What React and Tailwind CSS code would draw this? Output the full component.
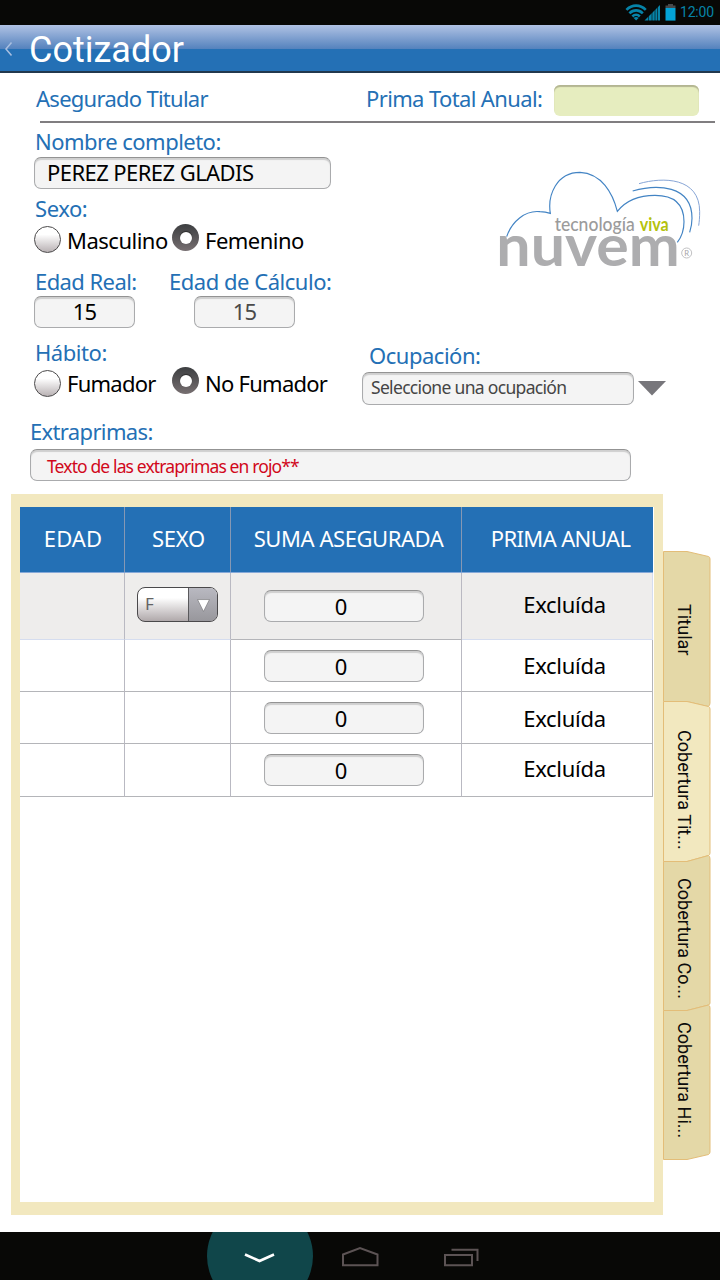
function Label({ children, className = "" }) {
  return (
    <div className={`whitespace-nowrap text-[22px] leading-[24px] text-[#2470b5] ${className}`}>
      {children}
    </div>
  );
}

function Field({ children, className = "" }) {
  return (
    <div
      className={`flex items-center whitespace-nowrap rounded-[7px] border border-[#aaabad] border-t-[#939393] bg-[#f4f4f4] shadow-[inset_0_2px_1px_#cfcfcf] ${className}`}
    >
      {children}
    </div>
  );
}

function Radio({ checked, className = "" }) {
  return checked ? (
    <div
      className={`flex size-[27px] shrink-0 items-center justify-center rounded-full bg-linear-to-b from-[#3d3f41] to-[#776f71] ${className}`}
    >
      <div className="size-[12px] rounded-full bg-white shadow-[0_-1px_1px_#2a2a2a]" />
    </div>
  ) : (
    <div
      className={`size-[27px] shrink-0 rounded-full border-[1.5px] border-[#4b4a4b] bg-linear-to-b from-[#ffffff] from-30% to-[#b9b2b4] ${className}`}
    />
  );
}

function StatusBar() {
  return (
    <div className="flex h-[25px] shrink-0 items-start justify-end bg-[#080806] pr-[4px]">
      <svg className="mt-[4px] h-[17px] w-[55px]" viewBox="0 0 55 17">
        <g fill="none" stroke="#0683a8" strokeWidth="2.6">
          <path d="M1.400 5.800 C7 0.200 15.200 0.200 20.800 5.800" />
          <path d="M4.400 9.300 C8.300 5.400 13.900 5.400 17.800 9.300" />
          <path d="M7.400 12.500 C9.600 10.200 12.600 10.200 14.800 12.500" />
        </g>
        <path d="M8.600 13.900 Q11.100 12 13.600 13.900 L11.100 16.500 Z" fill="#0683a8" />
        <path d="M19.500 16.500 L35 1 V16.500 Z" fill="#0683a8" />
        <path d="M23.500 11V17M27 8V17M30 5V17M32.500 2V17" stroke="#080806" strokeWidth="0.600" />
        <path d="M40.500 1.500h2.500V0h5v1.500h2.500v2.500h-10z" fill="#47484a" />
        <path d="M40.500 4h10v12.600h-10z" fill="#04a3d6" />
      </svg>
      <div className="ml-[0px] mt-[2px] w-[36px] whitespace-nowrap font-['Roboto',sans-serif] text-[14px] leading-[20px] tracking-[-0.2px] text-[#0683a8]">
        12:00
      </div>
    </div>
  );
}

function TitleBar() {
  return (
    <div className="flex h-[48px] shrink-0 items-start border-b-2 border-[#22384d] bg-[linear-gradient(to_bottom,#b0c2e4_0px,#5482bd_24px,#2470b5_24px)]">
      <svg className="ml-[4px] mt-[17px] h-[14px] w-[9px]" viewBox="0 0 9 14">
        <path d="M7.500 0.500 L2 7 L7.500 13.500" fill="none" stroke="#a9bfe0" strokeWidth="1.500" />
      </svg>
      <h1 className="ml-[16px] mt-[5px] whitespace-nowrap font-['Roboto',sans-serif] text-[36px] leading-[41px] text-white">
        Cotizador
      </h1>
    </div>
  );
}

function Logo() {
  return (
    <svg className="h-[120px] w-[230px]" viewBox="0 0 690 360">
      <g fill="none" stroke="#4384c4" strokeWidth="3.500">
        <path d="M50 230 C65 185 105 150 150 155 C163 155 172 157 181 160 C172 105 200 37 270 37 C335 40 368 100 382 154 C405 125 440 106 495 106 C560 106 582 140 582 185 C582 210 575 230 562 247" />
        <path d="M428 93 C500 72 606 74 606 175 C606 190 603 205 599 217" />
        <path d="M447 71 C520 50 629 52 629 155 C629 172 628 185 626 197" stroke="#87a5d6" strokeWidth="3" />
      </g>
      <text x="194" y="213" textLength="240" lengthAdjust="spacingAndGlyphs" fill="#9b9b9b" className="font-['Lato',sans-serif] text-[58px] font-medium">
        tecnología
      </text>
      <text x="449" y="213" textLength="87" lengthAdjust="spacingAndGlyphs" fill="#b4c20c" className="font-['Lato',sans-serif] text-[58px] font-bold">
        viva
      </text>
      <text x="19" y="318" textLength="550" lengthAdjust="spacingAndGlyphs" fill="#adadaf" className="font-['Lato',sans-serif] text-[174px] font-bold">
        nuvem
      </text>
      <circle cx="590" cy="279" r="15" fill="none" stroke="#b5b5b7" strokeWidth="2.500" />
      <text x="590" y="287" textAnchor="middle" fill="#a5a5a7" className="font-['Lato',sans-serif] text-[23px]">
        R
      </text>
    </svg>
  );
}

function Insured() {
  return (
    <div className="flex h-[421px] shrink-0 flex-col">
      <div className="mr-[5px] ml-[40px] flex h-[50px] shrink-0 items-start border-b-2 border-[#807e80]">
        <Label className="-ml-[4px] mt-[13px] w-[331px] tracking-[-0.73px]">Asegurado Titular</Label>
        <Label className="-ml-[1px] mt-[13px] w-[188px] tracking-[-0.63px]">Prima Total Anual:</Label>
        <div className="mt-[12px] h-[31px] w-[145px] rounded-[6px] bg-[#e6edbf] shadow-[inset_0_2px_1px_#b3b592]" />
      </div>

      <div className="flex h-[296px] shrink-0">
        <div className="flex w-[360px] shrink-0 flex-col pl-[34px]">
          <Label className="mt-[6px] pl-[1px] tracking-[-0.52px]">Nombre completo:</Label>
          <Field className="mt-[4px] h-[32px] w-[297px] pb-[2px] pl-[12px] text-[22px] tracking-[-0.57px] text-black">PEREZ PEREZ GLADIS</Field>
          <Label className="mt-[7px] pl-[1px] tracking-[-0.45px]">Sexo:</Label>
          <div className="mt-[3px] flex h-[31px] whitespace-nowrap text-[22px] leading-[24px] text-black">
            <Radio className="mt-[3px]" />
            <span className="mt-[5px] ml-[6px] w-[105px] tracking-[-0.5px]">Masculino</span>
            <Radio checked className="mt-px" />
            <span className="mt-[5px] ml-[6px] tracking-[-0.52px]">Femenino</span>
          </div>
          <div className="mt-[15px] flex">
            <Label className="w-[134px] pl-[1px] tracking-[-0.58px]">Edad Real:</Label>
            <Label className="pl-[1px] tracking-[-0.47px]">Edad de Cálculo:</Label>
          </div>
          <div className="mt-[3px] flex gap-[59px] text-[22px] tracking-[-0.8px]">
            <Field className="h-[32px] w-[101px] justify-center pb-[2px] text-black">15</Field>
            <Field className="h-[32px] w-[101px] justify-center pb-[2px] text-[#4a4a4a]">15</Field>
          </div>
          <Label className="mt-[12px] pl-[1px] tracking-[-0.45px]">Hábito:</Label>
          <div className="mt-[3px] flex h-[31px] whitespace-nowrap text-[22px] leading-[24px] text-black">
            <Radio className="mt-[3px]" />
            <span className="mt-[4px] ml-[6px] w-[105px] tracking-[-0.76px]">Fumador</span>
            <Radio checked />
            <span className="mt-[4px] ml-[6px] tracking-[-0.74px]">No Fumador</span>
          </div>
        </div>

        <div className="flex w-[360px] flex-col">
          <div className="mt-[37px] pl-[130px]">
            <Logo />
          </div>
          <Label className="mt-[63px] pl-[9px] tracking-[-0.48px]">Ocupación:</Label>
          <div className="mt-[5px] flex pl-[2px]">
            <Field className="h-[33px] w-[272px] pb-[2px] pl-[8px] text-[17.5px] tracking-[-0.68px] text-[#454545]">Seleccione una ocupación</Field>
            <svg className="mt-[9px] ml-[4px] h-[15px] w-[28px]" viewBox="0 0 28 15">
              <path d="M0 0H28L14 14.500Z" fill="#77767b" />
            </svg>
          </div>
        </div>
      </div>

      <Label className="pl-[30px] tracking-[-0.65px]">Extraprimas:</Label>
      <Field className="mt-[6px] ml-[30px] h-[32px] w-[601px] pt-[3px] pl-[16px] text-[17.5px] tracking-[-0.88px] text-[#d1081b]">Texto de las extraprimas en rojo**</Field>
    </div>
  );
}

const columns = [
  { title: "EDAD", style: "pl-[2px] tracking-[0.1px]" },
  { title: "SEXO", style: "pl-[2px] tracking-[-0.2px]" },
  { title: "SUMA ASEGURADA", style: "pl-[5px] tracking-[-0.44px]" },
  { title: "PRIMA ANUAL", style: "pl-[6px] tracking-[-0.62px]" },
];

const rows = [
  { height: "h-[67px] bg-[#eeedec]", field: "mt-[17px]", text: "mt-[19px]", light: true, select: true },
  { height: "h-[52px]", field: "mt-[10px]", text: "mt-[13px]" },
  { height: "h-[52px]", field: "mt-[10px]", text: "mt-[14px]" },
  { height: "h-[53px]", field: "mt-[10px]", text: "mt-[12px]" },
];

function SexSelect() {
  return (
    <div className="mt-[14px] ml-[12px] flex h-[35px] w-[81px] overflow-hidden rounded-[8px] border border-[#4a494b] bg-linear-to-b from-white from-30% to-[#b0a9ab]">
      <div className="w-[50px] pt-[4px] pl-[7px] text-[17px] leading-[24px] text-[#636363]">F</div>
      <div className="flex flex-1 items-center justify-center border-l border-[#5a595c] bg-linear-to-b from-[#b9b9c1] to-[#98979c]">
        <svg className="mt-[2px] h-[13px] w-[13px]" viewBox="0 0 12 12">
          <path d="M0.500 0.500H11.500L6 11.500Z" fill="#ffffff" stroke="#77777a" strokeWidth="0.600" />
        </svg>
      </div>
    </div>
  );
}

function CoverageTable() {
  const grid = "grid grid-cols-[105px_106px_231px_191px]";
  return (
    <div className="w-[633px] text-[22px] leading-[24px]">
      <div className={`${grid} h-[66px] border-b border-[#86a9d8] bg-[#2470b5] text-white`}>
        {columns.map((c, i) => (
          <div key={c.title} className={`flex items-center justify-center whitespace-nowrap pb-[4px] ${i < 3 ? "border-r border-[#8598b4]" : ""} ${c.style}`}>
            {c.title}
          </div>
        ))}
      </div>
      {rows.map((r, i) => {
        const line = r.light ? "border-[#d5ddef]" : "border-[#b4b5b9]";
        const side = "border-r-[#b9b9c2]";
        return (
          <div key={i} className={`${grid} ${r.height}`}>
            <div className={`border-r border-b ${line} ${side}`} />
            <div className={`border-r border-b ${line} ${side}`}>{r.select && <SexSelect />}</div>
            <div className={`border-r border-b border-[#b4b5b9] ${side}`}>
              <Field className={`ml-[33px] h-[32px] w-[160px] justify-center pr-[6px] text-black ${r.field}`}>0</Field>
            </div>
            <div className={`border-r border-b ${line}`}>
              <div className={`pl-[15px] text-center tracking-[-0.3px] text-black ${r.text}`}>Excluída</div>
            </div>
          </div>
        );
      })}
    </div>
  );
}

const tabs = [
  { name: "Titular", height: "h-[150px]", pad: "pt-[53px]", fill: "#e4d8a7", box: "0 0 48 150", d: "M0.500 0.500H24L45.500 5.500Q47 6 47 8V152Q47 155 45 155.500L24 150.500H0.500Z" },
  { name: "Cobertura Tit...", height: "h-[160px]", pad: "pt-[29px]", fill: "#f2e8bf", box: "0 0 48 160", d: "M0.500 0.500H24L45.500 5.500Q47 6 47 8V152Q47 154 45.500 154.500L24 160.500H0.500Z" },
  { name: "Cobertura Co...", height: "h-[149px]", pad: "pt-[17px]", fill: "#e4d8a7", box: "0 0 48 149", d: "M0.500 0.500H24L45.500 -5.500Q47 -5 47 -2V142Q47 143.500 45.500 144L24 149.500H0.500Z" },
  { name: "Cobertura Hi...", height: "h-[150px]", pad: "pt-[12px]", fill: "#e4d8a7", box: "0 0 48 150", d: "M0.500 0.500H24L45.500 -5Q47 -4.500 47 -2V142Q47 143.500 45.500 144.500L24 149.500H0.500Z" },
];

function SideTabs() {
  return (
    <div className="mt-[57px] flex w-[48px] flex-col">
      {tabs.map((t) => (
        <div key={t.name} className={`relative flex justify-center ${t.height} ${t.pad}`}>
          <svg className="absolute inset-0 size-full overflow-visible" viewBox={t.box}>
            <path d={t.d} fill={t.fill} stroke="#e3bd78" strokeWidth="1" />
          </svg>
          <span className="relative mr-[7px] whitespace-nowrap font-['Roboto',sans-serif] text-[18px] leading-[24px] tracking-[0.05px] text-[#0c0c0c] [writing-mode:vertical-rl]">
            {t.name}
          </span>
        </div>
      ))}
    </div>
  );
}

function NavBar() {
  return (
    <div className="flex h-[48px] shrink-0 justify-start overflow-hidden bg-[#080806] pl-[207px]">
      <div className="-mt-[29px] flex size-[106px] shrink-0 items-center justify-center rounded-full bg-[#10464a]">
        <svg className="mt-[4px] h-[12px] w-[32px]" viewBox="0 0 32 12">
          <path d="M1 2.500 L15.500 9 L30 2.500" fill="none" stroke="#ffffff" strokeWidth="2.600" />
        </svg>
      </div>
      <svg className="mt-[14px] ml-[28px] h-[21px] w-[38px] shrink-0" viewBox="0 0 38 21">
        <path d="M2 8.500 L19 2 L36.500 8.500 V19.200 H2 Z" fill="none" stroke="#5c5354" strokeWidth="2" />
      </svg>
      <svg className="mt-[14px] ml-[63px] h-[21px] w-[38px] shrink-0" viewBox="0 0 38 21">
        <path d="M3 9H30V19.200H3Z M9.500 3.800H35.500V15" fill="none" stroke="#5c5354" strokeWidth="2" />
      </svg>
    </div>
  );
}

export default function App() {
  return (
    <div className="flex h-[1280px] w-[720px] flex-col overflow-hidden bg-white font-['Noto_Sans',sans-serif]">
      <StatusBar />
      <TitleBar />
      <Insured />
      <div className="flex h-[738px] shrink-0 pl-[11px]">
        <div className="h-[721px] w-[652px] border-t-[13px] border-r-[9px] border-b-[13px] border-l-[9px] border-[#f2e8bf] bg-white">
          <CoverageTable />
        </div>
        <SideTabs />
      </div>
      <NavBar />
    </div>
  );
}
